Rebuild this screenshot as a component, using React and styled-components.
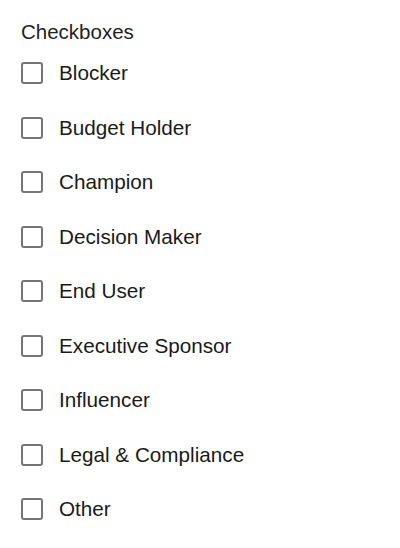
import React from "react";
import styled, { createGlobalStyle } from "styled-components";

const Global = createGlobalStyle`
  html, body { margin: 0; padding: 0; background: #fff; }
  body { font-family: "Liberation Sans", Arial, Helvetica, sans-serif; color: #1a1a1a; }
`;

const Page = styled.div`
  padding: 20px 21px;
  display: flex;
  flex-direction: column;
`;

const Title = styled.div`
  font-size: 20.5px;
  line-height: 24px;
  color: #1f1f1f;
  margin-bottom: 2px;
`;

const List = styled.div`
  display: flex;
  flex-direction: column;
`;

const Row = styled.label`
  display: flex;
  align-items: center;
  height: 54.5px;
  gap: 16px;
  cursor: pointer;
`;

const Box = styled.span`
  box-sizing: border-box;
  width: 22px;
  height: 22px;
  border: 2.5px solid #757575;
  border-radius: 3px;
  background: #fff;
  flex: none;
`;

const Label = styled.span`
  font-size: 20.7px;
  line-height: 24px;
  color: #1a1a1a;
`;

const items = [
  "Blocker",
  "Budget Holder",
  "Champion",
  "Decision Maker",
  "End User",
  "Executive Sponsor",
  "Influencer",
  "Legal & Compliance",
  "Other",
];

export default function App() {
  return (
    <>
      <Global />
      <Page>
        <Title>Checkboxes</Title>
        <List>
          {items.map((t) => (
            <Row key={t}>
              <Box />
              <Label>{t}</Label>
            </Row>
          ))}
        </List>
      </Page>
    </>
  );
}
